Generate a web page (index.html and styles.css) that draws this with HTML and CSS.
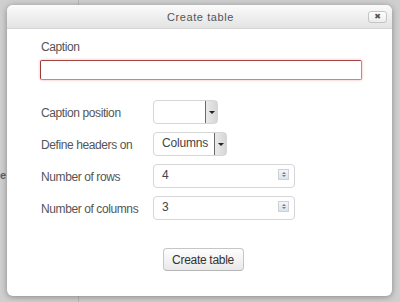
FILE: index.html
```html
<!DOCTYPE html>
<html lang="en">
<head>
    <meta charset="UTF-8">
    <title>Create table</title>
    <link rel="stylesheet" href="styles.css">
</head>
<body>
    <div class="backdrop-text">e</div>

    <div class="dialog">
        <div class="dialog-header">
            <span class="dialog-title">Create table</span>
            <button class="close-btn">&#x2716;</button>
        </div>

        <div class="dialog-body">
            <label class="caption-label">Caption</label>
            <input type="text" class="caption-input">

            <div class="form-rows">
                <div class="form-row">
                    <span class="form-label">Caption position</span>
                    <div class="select-box narrow">
                        <span class="select-value"></span>
                        <span class="select-arrow"><i></i></span>
                    </div>
                </div>
                <div class="form-row">
                    <span class="form-label">Define headers on</span>
                    <div class="select-box">
                        <span class="select-value">Columns</span>
                        <span class="select-arrow"><i></i></span>
                    </div>
                </div>
                <div class="form-row">
                    <span class="form-label">Number of rows</span>
                    <div class="number-box">
                        <span class="number-value">4</span>
                        <span class="spinner"><i class="up"></i><i class="down"></i></span>
                    </div>
                </div>
                <div class="form-row">
                    <span class="form-label">Number of columns</span>
                    <div class="number-box">
                        <span class="number-value">3</span>
                        <span class="spinner"><i class="up"></i><i class="down"></i></span>
                    </div>
                </div>
            </div>

            <div class="dialog-footer">
                <button class="create-btn">Create table</button>
            </div>
        </div>
    </div>
</body>
</html>
```

FILE: styles.css
```css
* {
    margin: 0;
    padding: 0;
    box-sizing: border-box;
}

body {
    width: 400px;
    height: 302px;
    overflow: hidden;
    position: relative;
    padding: 5px 8px 0 7px;
    font-family: "Liberation Sans", Arial, sans-serif;
    font-size: 12px;
    letter-spacing: -0.4px;
    color: #333;
    background: linear-gradient(to right, transparent 78px, #b9b9b9 78px, #b9b9b9 79px, transparent 79px), #cfcfcf;
}

/* page text peeking out behind the overlay */
.backdrop-text {
    position: absolute;
    left: 0;
    top: 169px;
    font-size: 11px;
    font-weight: bold;
    color: #5a6270;
}

.dialog {
    position: relative;
    width: 385px;
    height: 291px;
    background: #fff;
    border-radius: 6px;
    box-shadow: 0 1px 6px rgba(0, 0, 0, 0.35);
    overflow: hidden;
}

.dialog-header {
    height: 24px;
    display: flex;
    align-items: center;
    justify-content: center;
    position: relative;
    background: linear-gradient(#fbfbfb, #e3e3e3);
    border-bottom: 1px solid #d4d4d4;
}

.dialog-title {
    font-size: 11px;
    letter-spacing: 0.6px;
    color: #555;
    padding-left: 2px;
}

.close-btn {
    position: absolute;
    right: 5px;
    top: 6px;
    width: 19px;
    height: 12px;
    border: 1px solid #c4c4c4;
    border-radius: 3px;
    background: linear-gradient(#fff, #ececec);
    font-size: 8px;
    line-height: 10px;
    letter-spacing: 0;
    color: #555;
    font-family: "DejaVu Sans", sans-serif;
}

.dialog-body {
    padding: 9px 30px 0 33px;
}

.caption-label {
    display: block;
    padding-left: 1px;
    height: 18px;
    line-height: 18px;
    color: #555;
}

.caption-input {
    display: block;
    margin-top: 4px;
    width: 322px;
    height: 20px;
    border: 1px solid #c28986;
    border-left-color: #9b3b38;
    border-top-color: #a04541;
    border-radius: 2px;
    box-shadow: 0 0 3px #f0b6b4;
    outline: none;
}

.form-rows {
    display: flex;
    flex-direction: column;
    gap: 8px;
    margin-top: 20px;
    padding-left: 1px;
}

.form-row {
    display: flex;
    align-items: center;
    height: 24px;
}

.form-label {
    width: 112px;
    color: #555;
    padding-top: 2px;
    white-space: nowrap;
}

.select-box {
    display: flex;
    height: 24px;
    width: 74px;
    border: 1px solid #d6d6d6;
    border-radius: 4px;
    background: #fff;
    overflow: hidden;
}

.select-box.narrow {
    width: 65px;
}

.select-value {
    flex: 1;
    line-height: 20px;
    padding-left: 8px;
    color: #444;
    letter-spacing: -0.2px;
}

.select-arrow {
    width: 13px;
    display: flex;
    align-items: center;
    justify-content: center;
    background: linear-gradient(to right, #eaeaea, #d6d6d6);
    border: 1px solid #6a6a6a;
    border-radius: 0 3px 3px 0;
    margin: -1px -1px -1px 0;
}

.select-arrow i {
    width: 0;
    height: 0;
    border-left: 3px solid transparent;
    border-right: 3px solid transparent;
    border-top: 3px solid #222;
}

.number-box {
    display: flex;
    align-items: center;
    width: 142px;
    height: 24px;
    border: 1px solid #d6d6d6;
    border-radius: 4px;
    background: #fff;
    padding: 0 5px 0 8px;
}

.number-value {
    flex: 1;
    color: #444;
    padding-bottom: 3px;
}

.spinner {
    width: 11px;
    height: 11px;
    display: flex;
    flex-direction: column;
    align-items: center;
    justify-content: space-evenly;
    border: 1px solid #c9d2dc;
    background: linear-gradient(#f3f5f8, #dde3ea);
    margin-bottom: 3px;
}

.spinner .up {
    border-left: 2px solid transparent;
    border-right: 2px solid transparent;
    border-bottom: 2px solid #6b7d93;
}

.spinner .down {
    border-left: 2px solid transparent;
    border-right: 2px solid transparent;
    border-top: 2px solid #6b7d93;
}

.dialog-footer {
    display: flex;
    justify-content: center;
    margin-top: 28px;
    padding-left: 4px;
}

.create-btn {
    width: 81px;
    height: 23px;
    border: 1px solid #c6c6c6;
    border-bottom-color: #b5b5b5;
    border-radius: 4px;
    background: linear-gradient(#fefefe, #e8e8e8);
    font-family: "Liberation Sans", Arial, sans-serif;
    font-size: 12px;
    letter-spacing: -0.3px;
    color: #333;
}
```
